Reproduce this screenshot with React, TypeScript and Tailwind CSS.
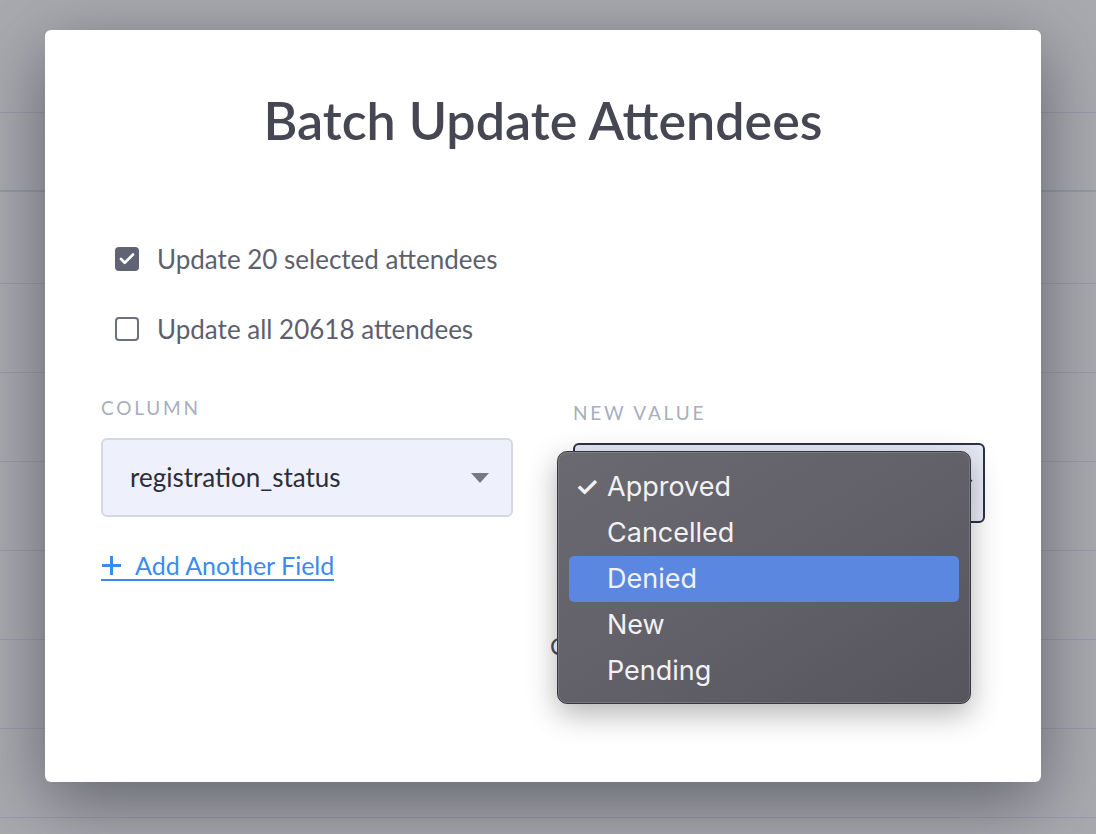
import { Check } from 'lucide-react';

const rows = [0, 1, 2, 3, 4, 5, 6];

const options = ['Approved', 'Cancelled', 'Denied', 'New', 'Pending'];

function Checkbox({ checked, label }: { checked: boolean; label: string }) {
  return (
    <label className="flex items-center gap-[18px] pl-[14px]">
      {checked ? (
        <span className="flex h-[24px] w-[24px] items-center justify-center rounded-[4px] bg-[#616375]">
          <Check className="h-[18px] w-[18px] text-white" strokeWidth={3.5} />
        </span>
      ) : (
        <span className="h-[24px] w-[24px] rounded-[4px] border-2 border-[#6e7080] bg-white" />
      )}
      <span className="text-[26px] leading-none text-[#5e5f6e]">{label}</span>
    </label>
  );
}

function Menu() {
  return (
    <div
      className="absolute left-[512px] top-[421px] w-[414px] rounded-[10px] border border-[#38373d] bg-gradient-to-br from-[#6b6970] via-[#626068] to-[#56545c] px-[11px] pb-[9px] pt-[12px] shadow-[0_10px_30px_rgba(0,0,0,0.3)] ring-1 ring-inset ring-white/15"
      style={{ fontFamily: 'Inter, "Noto Sans", sans-serif' }}
    >
      {options.map((o) => (
        <div
          key={o}
          className={`flex h-[46px] items-center rounded-[5px] text-[27px] text-[#f2f2f4] ${o === 'Denied' ? 'bg-[#5b87e0]' : ''}`}
        >
          <span className="w-[38px] pl-[6px] text-[27px] font-semibold">{o === 'Approved' ? '✓' : ''}</span>
          <span>{o}</span>
        </div>
      ))}
    </div>
  );
}

export default function App() {
  return (
    <div
      className="relative h-[834px] w-[1096px] overflow-hidden bg-[#a9aaaf]"
      style={{ fontFamily: 'Lato, "Open Sans", sans-serif' }}
    >
      {/* table underneath the overlay */}
      <div className="h-[113px] border-b border-[#999ca7]" />
      <div className="h-[79px] border-b-2 border-[#959aa6]" />
      <div className="h-[92px] border-b border-[#999ca7]" />
      {rows.map((r) => (
        <div key={r} className="h-[89px] border-b border-[#999ca7]" />
      ))}

      {/* modal */}
      <div className="absolute left-[45px] top-[30px] h-[752px] w-[996px] rounded-[6px] bg-white shadow-[0_20px_70px_rgba(40,42,55,0.55)]">
        <h1 className="pt-[64px] text-center text-[52px] font-semibold leading-none text-[#464753]">
          Batch Update Attendees
        </h1>

        <div className="px-[56px] pt-[100px]">
          <div className="flex flex-col gap-[44px]">
            <Checkbox checked label="Update 20 selected attendees" />
            <Checkbox checked={false} label="Update all 20618 attendees" />
          </div>

          <div className="mt-[56px] flex gap-[60px]">
            <div className="w-[412px]">
              <div className="text-[19px] leading-none tracking-[2.8px] text-[#a7aebd]">COLUMN</div>
              <div className="mt-[21px] flex h-[79px] items-center justify-between rounded-[6px] border-2 border-[#d6d8df] bg-[#eef1fb] pl-[27px] pr-[22px]">
                <span className="text-[26px] text-[#2c2d38]">registration_status</span>
                <svg width="18" height="10" viewBox="0 0 18 10">
                  <path d="M0 0 L18 0 L9 10 Z" fill="#777882" />
                </svg>
              </div>
              <a className="mt-[36px] flex w-fit items-center gap-[13px] border-b-2 border-[#3a8bef] pb-[1px] text-[25px] leading-none text-[#3a8bef]">
                <svg width="21" height="21" viewBox="0 0 21 21">
                  <path d="M10.5 1 V20 M1 10.5 H20" stroke="#3a8bef" strokeWidth="3" />
                </svg>
                <span>Add Another Field</span>
              </a>
            </div>

            <div className="w-[412px] pt-[5px]">
              <div className="text-[19px] leading-none tracking-[2.8px] text-[#a7aebd]">NEW VALUE</div>
              <div className="mt-[21px] flex h-[80px] items-center justify-end rounded-[6px] border-2 border-[#2d3147] bg-gradient-to-b from-[#e6e8f5] to-[#eceef8] pr-[10px]">
                <svg width="12" height="8" viewBox="0 0 12 8">
                  <path d="M1 1 L6 6 L11 1" fill="none" stroke="#3b3d4c" strokeWidth="1.6" />
                </svg>
              </div>
              <div className="mt-[105px] -ml-[23px] text-[24px] text-[#4b4d5c]">Cancel</div>
            </div>
          </div>
        </div>

        <Menu />
      </div>
    </div>
  );
}
